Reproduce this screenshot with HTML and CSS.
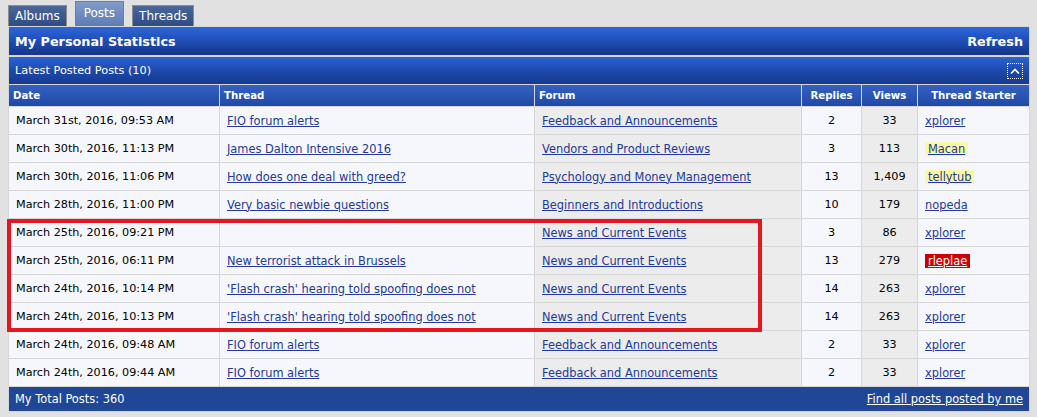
FILE: index.html
```html
<!DOCTYPE html>
<html lang="en">
<head>
  <meta charset="UTF-8">
  <title>My Personal Statistics</title>
  <link rel="stylesheet" href="styles.css">
</head>
<body>

  <div class="tabs">
    <a class="tab">Albums</a>
    <a class="tab tab-active">Posts</a>
    <a class="tab">Threads</a>
  </div>

  <div class="block">
    <div class="block-head">
      <span>My Personal Statistics</span>
      <a class="refresh">Refresh</a>
    </div>

    <table class="stats">
      <colgroup>
        <col class="col-date">
        <col class="col-thread">
        <col class="col-forum">
        <col class="col-replies">
        <col class="col-views">
        <col class="col-starter">
      </colgroup>
      <thead>
        <tr class="row-sub">
          <td colspan="6">
            <div class="sub-inner">
              <span>Latest Posted Posts (10)</span>
              <span class="collapse">
                <svg width="10" height="6" viewBox="0 0 10 6"><path d="M1 5.5 L5 1.5 L9 5.5" fill="none" stroke="#fff" stroke-width="1.6"/></svg>
              </span>
            </div>
          </td>
        </tr>
        <tr class="row-cols">
          <th>Date</th>
          <th>Thread</th>
          <th>Forum</th>
          <th class="center">Replies</th>
          <th class="center">Views</th>
          <th class="center">Thread Starter</th>
        </tr>
      </thead>
      <tbody>
        <tr>
          <td class="alt1">March 31st, 2016, 09:53 AM</td>
          <td class="alt1"><a>FIO forum alerts</a></td>
          <td class="alt2"><a>Feedback and Announcements</a></td>
          <td class="alt1 center">2</td>
          <td class="alt2 center">33</td>
          <td class="alt1"><a>xplorer</a></td>
        </tr>
        <tr>
          <td class="alt1">March 30th, 2016, 11:13 PM</td>
          <td class="alt1"><a>James Dalton Intensive 2016</a></td>
          <td class="alt2"><a>Vendors and Product Reviews</a></td>
          <td class="alt1 center">3</td>
          <td class="alt2 center">113</td>
          <td class="alt1"><a class="user-yellow">Macan</a></td>
        </tr>
        <tr>
          <td class="alt1">March 30th, 2016, 11:06 PM</td>
          <td class="alt1"><a>How does one deal with greed?</a></td>
          <td class="alt2"><a>Psychology and Money Management</a></td>
          <td class="alt1 center">13</td>
          <td class="alt2 center">1,409</td>
          <td class="alt1"><a class="user-yellow">tellytub</a></td>
        </tr>
        <tr>
          <td class="alt1">March 28th, 2016, 11:00 PM</td>
          <td class="alt1"><a>Very basic newbie questions</a></td>
          <td class="alt2"><a>Beginners and Introductions</a></td>
          <td class="alt1 center">10</td>
          <td class="alt2 center">179</td>
          <td class="alt1"><a>nopeda</a></td>
        </tr>
        <tr>
          <td class="alt1">March 25th, 2016, 09:21 PM</td>
          <td class="alt1"></td>
          <td class="alt2"><a>News and Current Events</a></td>
          <td class="alt1 center">3</td>
          <td class="alt2 center">86</td>
          <td class="alt1"><a>xplorer</a></td>
        </tr>
        <tr>
          <td class="alt1">March 25th, 2016, 06:11 PM</td>
          <td class="alt1"><a>New terrorist attack in Brussels</a></td>
          <td class="alt2"><a>News and Current Events</a></td>
          <td class="alt1 center">13</td>
          <td class="alt2 center">279</td>
          <td class="alt1"><a class="user-red">rleplae</a></td>
        </tr>
        <tr>
          <td class="alt1">March 24th, 2016, 10:14 PM</td>
          <td class="alt1"><a>'Flash crash' hearing told spoofing does not</a></td>
          <td class="alt2"><a>News and Current Events</a></td>
          <td class="alt1 center">14</td>
          <td class="alt2 center">263</td>
          <td class="alt1"><a>xplorer</a></td>
        </tr>
        <tr>
          <td class="alt1">March 24th, 2016, 10:13 PM</td>
          <td class="alt1"><a>'Flash crash' hearing told spoofing does not</a></td>
          <td class="alt2"><a>News and Current Events</a></td>
          <td class="alt1 center">14</td>
          <td class="alt2 center">263</td>
          <td class="alt1"><a>xplorer</a></td>
        </tr>
        <tr>
          <td class="alt1">March 24th, 2016, 09:48 AM</td>
          <td class="alt1"><a>FIO forum alerts</a></td>
          <td class="alt2"><a>Feedback and Announcements</a></td>
          <td class="alt1 center">2</td>
          <td class="alt2 center">33</td>
          <td class="alt1"><a>xplorer</a></td>
        </tr>
        <tr>
          <td class="alt1">March 24th, 2016, 09:44 AM</td>
          <td class="alt1"><a>FIO forum alerts</a></td>
          <td class="alt2"><a>Feedback and Announcements</a></td>
          <td class="alt1 center">2</td>
          <td class="alt2 center">33</td>
          <td class="alt1"><a>xplorer</a></td>
        </tr>
      </tbody>
      <tfoot>
        <tr class="row-foot">
          <td colspan="6">
            <div class="foot-inner">
              <span>My Total Posts: 360</span>
              <a>Find all posts posted by me</a>
            </div>
          </td>
        </tr>
      </tfoot>
    </table>

    <!-- highlight around the news posts -->
    <div class="mark"></div>
  </div>

</body>
</html>
```

FILE: styles.css
```css
body {
  margin: 0;
  padding: 0 7px 0 8px;
  background: #e1e1e1;
  font-family: "DejaVu Sans", Verdana, sans-serif;
  font-size: 11.2px;
  color: #000;
}

a {
  color: #22399a;
  text-decoration: underline;
  cursor: pointer;
}

/* Tabs */
.tabs {
  display: flex;
  align-items: flex-end;
  gap: 8px;
  height: 26px;
}

.tab {
  box-sizing: border-box;
  height: 21px;
  padding: 0 6px;
  border: 1px solid #8c8c8c;
  border-bottom: none;
  background: linear-gradient(#4a6699, #2f4c85);
  color: #fff;
  font-size: 12px;
  line-height: 20px;
  text-decoration: none;
}

.tab-active {
  height: 25px;
  padding: 0 8px;
  line-height: 22px;
  border-color: #7c7c7c;
  background: linear-gradient(#7f9bcb, #5d7db5);
}

/* Block */
.block {
  position: relative;
  width: 1022px;
  box-sizing: border-box;
  padding: 1px;
  background: #d6d6d6;
}

.block-head {
  display: flex;
  justify-content: space-between;
  align-items: center;
  height: 28px;
  padding: 0 6px;
  background: linear-gradient(#2c66dc, #1f4bb0 55%, #163688);
  color: #fff;
  font-size: 12.8px;
  font-weight: bold;
}

.refresh {
  color: #fff;
  text-decoration: none;
}

.stats {
  width: 1022px;
  margin: 1px -1px -1px;
  border-collapse: separate;
  border-spacing: 1px;
  table-layout: fixed;
  background: #d6d6d6;
}

.col-date { width: 210px; }
.col-thread { width: 314px; }
.col-forum { width: 266px; }
.col-replies { width: 59px; }
.col-views { width: 55px; }
.col-starter { width: 111px; }

.stats th,
.stats td {
  padding: 0 7px;
  text-align: left;
  vertical-align: middle;
  white-space: nowrap;
  overflow: hidden;
}

.stats td a {
  font-size: 11.4px;
}

.row-sub {
  height: 27px;
}

.row-sub td {
  padding: 0 6px;
  background: linear-gradient(#2a62d6, #1d47a8 55%, #163a8e);
  color: #fff;
  font-size: 11.3px;
}

.sub-inner,
.foot-inner {
  display: flex;
  justify-content: space-between;
  align-items: center;
}

.collapse {
  display: flex;
  align-items: center;
  justify-content: center;
  width: 14px;
  height: 14px;
  border: 1px dotted #fff;
}

.row-cols {
  height: 21px;
}

.row-cols th {
  padding: 0 4px;
  background: linear-gradient(#3460c2, #2a55b4 50%, #2049a6);
  color: #fff;
  font-size: 10.2px;
  font-weight: bold;
}

.stats .center {
  text-align: center;
}

tbody tr {
  height: 27px;
}

.alt1 {
  background: #f5f7fc;
}

.alt2 {
  background: #ececec;
}

.user-yellow {
  padding: 0 3px;
  background: #fafaa2;
}

.user-red {
  padding: 0 3px;
  background: #cc0000;
  color: #fff;
}

.row-foot {
  height: 24px;
}

.row-foot td {
  padding: 0 6px;
  background: #1f4795;
  color: #fff;
  font-size: 11.4px;
}

.row-foot td a {
  color: #fff;
  font-size: 11.4px;
}

.mark {
  position: absolute;
  left: -1px;
  top: 193px;
  width: 755px;
  height: 113px;
  box-sizing: border-box;
  border: 4px solid #e5161f;
  pointer-events: none;
}
```
